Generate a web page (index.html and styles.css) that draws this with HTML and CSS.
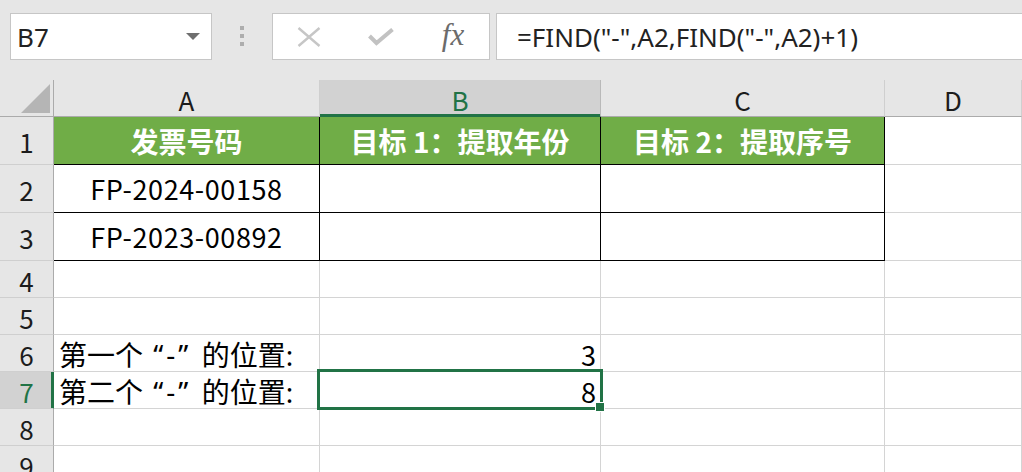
FILE: index.html
```html
<!DOCTYPE html>
<html lang="zh-CN">
<head>
<meta charset="utf-8">
<title>Sheet</title>
<link rel="stylesheet" href="styles.css">
</head>
<body>
<div class="app">
  <div class="toolbar">
    <div class="namebox">
      <span class="ref">B7</span>
      <svg class="caret" width="14" height="7" viewBox="0 0 14 7"><polygon points="0,0 14,0 7,7" fill="#6f6f6f"/></svg>
    </div>
    <div class="grip"><i></i><i></i><i></i></div>
    <div class="fbtns">
      <span class="fbtn">
        <svg width="24" height="20" viewBox="0 0 24 20"><path d="M1.5 1 L22.5 19 M22.5 1 L1.5 19" stroke="#c6c6c6" stroke-width="2.4" fill="none"/></svg>
      </span>
      <span class="fbtn">
        <svg width="26" height="18" viewBox="0 0 26 18"><path d="M1.5 8 L8.5 15 L24.5 1.5" stroke="#c2c2c2" stroke-width="4" fill="none"/></svg>
      </span>
      <span class="fbtn fx">fx</span>
    </div>
    <div class="formula">=FIND("-",A2,FIND("-",A2)+1)</div>
  </div>

  <div class="sheet">
    <div class="ch corner"><svg width="53" height="36" viewBox="0 0 53 36"><polygon points="50,4 50,33 21,33" fill="#b5b5b5"/></svg></div>
    <div class="ch">A</div>
    <div class="ch sel">B</div>
    <div class="ch">C</div>
    <div class="ch">D</div>

    <div class="rh">1</div>
    <div class="c hd tb">发票号码</div>
    <div class="c hd tb">目标 1：提取年份</div>
    <div class="c hd tb">目标 2：提取序号</div>
    <div class="c"></div>

    <div class="rh">2</div>
    <div class="c tb ctr">FP-2024-00158</div>
    <div class="c tb"></div>
    <div class="c tb"></div>
    <div class="c"></div>

    <div class="rh">3</div>
    <div class="c tb ctr">FP-2023-00892</div>
    <div class="c tb"></div>
    <div class="c tb"></div>
    <div class="c"></div>

    <div class="rh">4</div>
    <div class="c"></div><div class="c"></div><div class="c"></div><div class="c"></div>

    <div class="rh">5</div>
    <div class="c"></div><div class="c"></div><div class="c"></div><div class="c"></div>

    <div class="rh">6</div>
    <div class="c lbl">第一个<span class="q"> “-” </span>的位置:</div>
    <div class="c num">3</div>
    <div class="c"></div><div class="c"></div>

    <div class="rh rsel">7</div>
    <div class="c lbl">第二个<span class="q"> “-” </span>的位置:</div>
    <div class="c num active">8<span class="selbox"></span><span class="handle"></span></div>
    <div class="c"></div><div class="c"></div>

    <div class="rh">8</div>
    <div class="c"></div><div class="c"></div><div class="c"></div><div class="c"></div>

    <div class="rh">9</div>
    <div class="c"></div><div class="c"></div><div class="c"></div><div class="c"></div>
  </div>
</div>
</body>
</html>
```

FILE: styles.css
```css
* { box-sizing: border-box; }
html, body { margin: 0; padding: 0; }
body {
  width: 1022px;
  height: 472px;
  overflow: hidden;
  background: #ffffff;
  font-family: "Noto Sans CJK SC", "Noto Sans", sans-serif;
}
.app { display: flex; flex-direction: column; }

.toolbar {
  height: 80px;
  background: #e6e6e6;
  display: flex;
  align-items: flex-start;
  padding: 13px 0 0 10px;
  overflow: hidden;
}
.toolbar > * { flex: none; }
.namebox {
  width: 202px;
  height: 47px;
  background: #fff;
  border: 1px solid #c6c6c6;
  display: flex;
  align-items: center;
  justify-content: space-between;
  padding: 0 11px 0 6px;
  font-family: "Noto Sans", sans-serif;
  font-size: 26px;
  color: #222;
}
.ref { line-height: 1; padding-top: 1px; }
.caret { display: block; margin-top: -1px; }
.grip {
  width: 60px;
  height: 47px;
  display: flex;
  flex-direction: column;
  align-items: center;
  padding-top: 13px;
  gap: 4px;
}
.grip i { display: block; width: 4px; height: 4px; background: #adadad; }
.fbtns {
  width: 218px;
  height: 47px;
  background: #fff;
  border: 1px solid #c6c6c6;
  display: flex;
}
.fbtn {
  flex: 1;
  display: flex;
  align-items: center;
  justify-content: center;
}
.fbtn svg { display: block; }
.fx {
  font-family: "Liberation Serif", serif;
  font-style: italic;
  font-size: 31px;
  color: #6b6b6b;
  padding-bottom: 3px;
}
.formula {
  margin-left: 6px;
  width: 560px;
  height: 47px;
  background: #fff;
  border: 1px solid #c6c6c6;
  border-right: none;
  display: flex;
  align-items: center;
  padding-left: 20px;
  font-family: "Noto Sans", sans-serif;
  font-size: 26px;
  color: #222;
  white-space: nowrap;
}

.sheet {
  display: grid;
  grid-template-columns: 54px 266px 281px 284px 137px;
  grid-template-rows: 37px 48px 48px 48px repeat(6, 37px);
}
.ch {
  background: #e6e6e6;
  border-right: 1px solid #cfcfcf;
  border-bottom: 1px solid #ababab;
  display: flex;
  align-items: center;
  justify-content: center;
  font-size: 26px;
  color: #1c1c1c;
  padding-top: 2px;
}
.corner { padding: 0; align-items: stretch; border-right-color: #ababab; }
.corner svg { display: block; }
.ch.sel {
  background: #d2d2d2;
  color: #217346;
  border-bottom: 1px solid #217346;
  box-shadow: inset 0 -2px 0 #217346;
  border-right-color: #b9b9b9;
}
.rh {
  background: #e6e6e6;
  border-right: 1px solid #ababab;
  border-bottom: 1px solid #cfcfcf;
  display: flex;
  align-items: center;
  justify-content: center;
  font-size: 26px;
  color: #1c1c1c;
  padding-top: 2px;
}
.rh.rsel {
  background: #d2d2d2;
  color: #217346;
  border-right: 1px solid #217346;
  box-shadow: inset -2px 0 0 #217346;
}
.c {
  border-right: 1px solid #d4d4d4;
  border-bottom: 1px solid #d4d4d4;
  display: flex;
  align-items: center;
  font-size: 28px;
  color: #000;
  white-space: pre;
}
.c.tb { border-right-color: #000; border-bottom-color: #000; }
.c.hd {
  background: #70ad47;
  color: #fff;
  font-weight: bold;
  justify-content: center;
}
.c.ctr { justify-content: center; font-size: 27px; letter-spacing: 0.6px; }
.c.lbl {
  padding-left: 5px;
  padding-top: 2px;
  font-family: "Noto Sans", "Noto Sans CJK SC", sans-serif;
}
.q { letter-spacing: 3px; }
.c.num { justify-content: flex-end; padding-right: 4px; padding-top: 2px; font-size: 27px; }
.c.active { position: relative; z-index: 2; }
.selbox {
  position: absolute;
  left: -3px;
  top: -3px;
  width: 286px;
  height: 41px;
  border: 3px solid #217346;
  pointer-events: none;
}
.handle {
  position: absolute;
  left: 275px;
  top: 30px;
  width: 10px;
  height: 10px;
  background: #217346;
  border: 1px solid #fff;
}
```
